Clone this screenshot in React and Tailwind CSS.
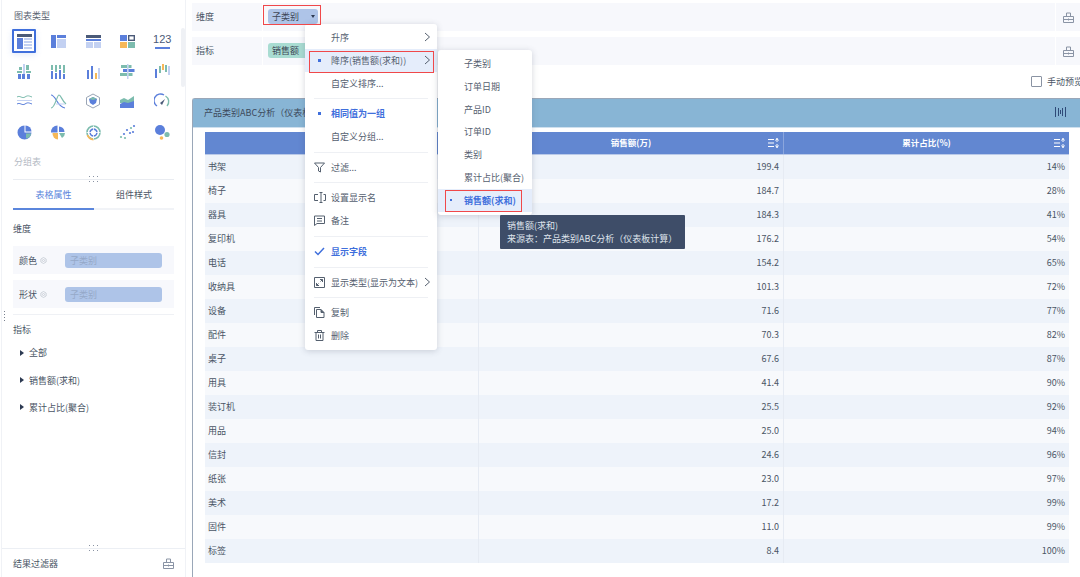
import React from "react";

const B = "#5b7fdb", L = "#c3d1f2", T = "#7dbcae", O = "#f6b858", D = "#4b5a78";

const Bars = ({ items }) => (
  <>
    {items.map(([x, y, w, h, c], i) => (
      <rect key={i} x={x} y={y} width={w} height={h} fill={c} />
    ))}
  </>
);

const chartIcons = [
  <Bars items={[[1, 1, 15, 3, D], [1, 5, 6, 11, B], [8, 5, 8, 2, L], [8, 8, 8, 2, L], [8, 11, 8, 2, L], [8, 14, 8, 2, L]]} />,
  <Bars items={[[1, 2, 5, 13, B], [7, 2, 9, 3, B], [7, 6, 9, 9, L]]} />,
  <Bars items={[[1, 2, 15, 3, D], [1, 6, 15, 2, B], [1, 9, 7, 6, L], [9, 9, 7, 6, L]]} />,
  <>
    <Bars items={[[1, 2, 7, 6, B], [1, 9, 7, 6, O], [9, 9, 7, 6, T]]} />
    <rect x="9.7" y="2.7" width="5.6" height="4.6" fill="none" stroke={D} strokeWidth="1.4" />
  </>,
  <Bars items={[[1, 14, 15, 1.6, B]]} />,
  <Bars items={[[7, 1, 2, 15, L], [3, 4, 3, 3, T], [10, 2, 3, 5, T], [1, 8, 5, 2, T], [10, 8, 5, 2, T], [2, 11, 3, 5, B], [6, 11, 3, 5, B], [11, 11, 3, 5, B]]} />,
  <Bars items={[[1, 2, 2, 5, T], [1, 8, 2, 8, B], [5, 2, 2, 7, T], [5, 10, 2, 6, B], [9, 2, 2, 4, T], [9, 7, 2, 9, B], [13, 2, 2, 8, T], [13, 11, 2, 5, B]]} />,
  <Bars items={[[2, 7, 2, 9, B], [6, 3, 2, 13, B], [10, 10, 2, 6, O], [13, 5, 2, 11, L]]} />,
  <Bars items={[[8, 1, 1.5, 15, L], [2, 2, 6, 3, T], [9.5, 2, 3, 3, T], [4, 6, 4, 3, B], [9.5, 6, 6, 3, B], [1, 10, 7, 3, T], [9.5, 10, 4, 3, T]]} />,
  <Bars items={[[1, 6, 2, 9, B], [5, 3, 2, 7, T], [8, 1, 2, 6, O], [11, 2, 2, 7, T], [14, 3, 2, 9, L]]} />,
  <>
    <path d="M1 4c3-2 5 2 8 0s4-1 7 0" fill="none" stroke={T} strokeWidth="1" />
    <path d="M1 7.500h15" fill="none" stroke={L} strokeWidth="1" />
    <path d="M1 11c3-2 5 2 8 0s4-1 7 0" fill="none" stroke={B} strokeWidth="1" />
  </>,
  <>
    <path d="M1 2c5 0 6 12 14 13" fill="none" stroke={B} strokeWidth="1.200" />
    <path d="M1 15c4 0 6-13 8-13s3 6 7 9" fill="none" stroke={T} strokeWidth="1.200" />
    <path d="M6 11h9" fill="none" stroke={L} strokeWidth="1" />
  </>,
  <>
    <path d="M8 1l6.500 3.500v7L8 15l-6.500-3.500v-7z" fill="none" stroke="#9aa5b5" strokeWidth="1" />
    <path d="M4 6l4-2 4 2-1 4-3 2-3-2z" fill={B} />
    <path d="M4 6l4-2 4 2-4 1z" fill={T} />
  </>,
  <>
    <path d="M1 7l4-2 4 2 6-4v7H1z" fill={T} />
    <path d="M1 11l4-2 4 1 6-2v7H1z" fill={B} />
  </>,
  <>
    <path d="M3 13A6.500 6.500 0 0 1 10 2" fill="none" stroke={B} strokeWidth="1.400" />
    <path d="M11.500 3A6.500 6.500 0 0 1 13 13" fill="none" stroke={T} strokeWidth="1.400" />
    <path d="M6 10l5-4-3 6z" fill={D} />
  </>,
  <>
    <path d="M8.500 1.500a7 7 0 1 0 7 7h-7z" fill={B} />
    <path d="M9.500 1.500a6 6 0 0 1 6 6h-6z" fill={B} />
    <path d="M10 9.500h5a5 5 0 0 1-5 5z" fill={T} />
  </>,
  <>
    <path d="M7.500 1.500v7H1a6.500 6.500 0 0 1 6.500-7z" fill={B} />
    <path d="M9 2.500a5.500 5.500 0 0 1 5.500 5.500H9z" fill={B} />
    <path d="M9 9h6a6 6 0 0 1-3 5z" fill={T} />
    <path d="M8 9v6.500A6 6 0 0 1 2.500 9z" fill={O} />
  </>,
  <>
    <circle cx="8.500" cy="8.500" r="6.500" fill="none" stroke={T} strokeWidth="1.600" />
    <path d="M2.500 11a6.500 6.500 0 0 0 6 4.500" fill="none" stroke={O} strokeWidth="1.800" />
    <circle cx="8.500" cy="8.500" r="3.400" fill="none" stroke={B} strokeWidth="1.600" />
    <path d="M8.500 1.500v14M1.500 8.500h14" stroke="#ffffff" strokeWidth="0.800" />
  </>,
  <>
    {[[2, 13, T], [5, 10, B], [6, 14, T], [8, 6, B], [11, 9, B], [12, 4, T], [14, 8, B], [15, 2, B]].map(([x, y, c], i) => (
      <circle key={i} cx={x} cy={y} r="1.100" fill={c} />
    ))}
  </>,
  <>
    <circle cx="6" cy="6" r="5" fill={B} />
    <circle cx="13" cy="10.500" r="2.600" fill={T} />
    <circle cx="7.500" cy="14" r="1.800" fill={O} />
  </>,
];

const Chart = ({ i }) => (
  <svg width="17" height="17" viewBox="0 0 17 17">
    {chartIcons[i]}
  </svg>
);

const LockIcon = () => (
  <svg width="11" height="11" viewBox="0 0 11 11" fill="none" stroke="#8a94a5" strokeWidth="1">
    <path d="M.5 4.500h10v6H.5zM3.500 4.500V1h4v3.500M.5 7.500h10M5.500 6.500v2" />
  </svg>
);

const Chevron = () => (
  <svg width="7" height="10" viewBox="0 0 7 10" fill="none" stroke="#55606f" strokeWidth="1">
    <path d="M1 1l4.500 4L1 9" />
  </svg>
);

const SortIcon = () => (
  <svg width="11" height="10" viewBox="0 0 11 10" fill="none" stroke="#ffffff" strokeWidth="1">
    <path d="M0 1.500h6M0 5h6M0 8.500h6M9 0v4M7.500 2.500L9 .5l1.500 2M9 6v4M7.500 7.500L9 9.500l1.500-2" />
  </svg>
);

const Handle = () => (
  <div className="grid grid-cols-[1px_1px_1px] gap-x-[3px] gap-y-[4px]">
    {[0, 1, 2, 3, 4, 5].map((i) => (
      <span key={i} className="w-[1px] h-[1px] bg-[#8a93a3]" />
    ))}
  </div>
);

const Hint = () => (
  <svg width="7" height="7" viewBox="0 0 7 7" fill="none" stroke="#c3c9d2" strokeWidth="0.800">
    <path d="M3.500.5l2.600 1.500v3L3.500 6.500.9 5V2z" />
    <circle cx="3.500" cy="3.500" r="1" />
  </svg>
);

const icons = {
  filter: (
    <svg width="11" height="11" viewBox="0 0 11 11" fill="none" stroke="#55606f" strokeWidth="1">
      <path d="M.5 1h10L6.500 5.500V10l-2-1V5.500z" />
    </svg>
  ),
  rename: (
    <svg width="12" height="11" viewBox="0 0 12 11" fill="none" stroke="#55606f" strokeWidth="1">
      <path d="M4 2.500H.5v6H4M9.500 2.500h2v6h-2M7 .5v10M5.500.5h3M5.500 10.500h3" />
    </svg>
  ),
  note: (
    <svg width="11" height="11" viewBox="0 0 11 11" fill="none" stroke="#55606f" strokeWidth="1">
      <path d="M.5 1h10v7.500H3L.5 10.500zM3 3.500h5M3 6h5" />
    </svg>
  ),
  check: (
    <svg width="11" height="9" viewBox="0 0 11 9" fill="none" stroke="#3f6fdc" strokeWidth="1.500">
      <path d="M1 4.500l3 3L10 1" />
    </svg>
  ),
  type: (
    <svg width="11" height="11" viewBox="0 0 11 11" fill="none" stroke="#55606f" strokeWidth="1">
      <path d="M.5.5h10v10H.5z" />
      <path d="M2.500 8.500l2-2M6 2.500h2.500V5M2.500 6v2.500H5M8.500 2.500l-2 2" />
    </svg>
  ),
  copy: (
    <svg width="11" height="11" viewBox="0 0 11 11" fill="none" stroke="#55606f" strokeWidth="1">
      <path d="M.5 8V.5H6M2.500 2.500h4.500l3 3v5h-7.500z" />
      <path d="M7 2.500v3h3" fill="#55606f" />
    </svg>
  ),
  trash: (
    <svg width="11" height="11" viewBox="0 0 11 11" fill="none" stroke="#55606f" strokeWidth="1">
      <path d="M.5 2.500h10M3.500 2.500V.5h4v2M2 2.500v8h7v-8M4.500 4.500v4M6.500 4.500v4" />
    </svg>
  ),
};

const Dot = ({ small }) => <span className={`${small ? "w-[2px] h-[2px]" : "w-[3px] h-[3px]"} bg-[#3f6fdc] shrink-0`} />;

const Sep = ({ h = "h-[7px]" }) => (
  <div className={`${h} flex items-center mx-[9px]`}>
    <div className="w-full h-[1px] bg-[#eef0f4]" />
  </div>
);

const Item = ({ icon, dot, active, bold, chev, children }) => (
  <div className={`h-[23px] flex items-center relative ${active ? "bg-[#e5edfb]" : ""}`}>
    <span className="w-[26px] flex items-center justify-center shrink-0 pl-[3px]">
      {dot ? <Dot /> : icon}
    </span>
    <span className={`flex-1 whitespace-nowrap ${bold ? "text-[#3f6fdc] font-bold" : ""}`}>{children}</span>
    {chev && (
      <span className="absolute right-[6px] top-[6px]">
        <Chevron />
      </span>
    )}
  </div>
);

const rows = [
  ["书架", "199.4", "14%"], ["椅子", "184.7", "28%"], ["器具", "184.3", "41%"], ["复印机", "176.2", "54%"],
  ["电话", "154.2", "65%"], ["收纳具", "101.3", "72%"], ["设备", "71.6", "77%"], ["配件", "70.3", "82%"],
  ["桌子", "67.6", "87%"], ["用具", "41.4", "90%"], ["装订机", "25.5", "92%"], ["用品", "25.0", "94%"],
  ["信封", "24.6", "96%"], ["纸张", "23.0", "97%"], ["美术", "17.2", "99%"], ["固件", "11.0", "99%"],
  ["标签", "8.4", "100%"],
];

const AttrRow = ({ label, className }) => (
  <div className={`mx-[11px] h-[28px] bg-[#f7f8fc] flex items-center ${className}`}>
    <span className="w-[52px] pl-[6px] flex items-center gap-[3px]">
      {label}
      <Hint />
    </span>
    <span className="w-[97px] h-[15px] rounded-[3px] bg-[#aec4e8] text-[#96a9c8] pl-[5px] flex items-center">子类别</span>
  </div>
);

export default function App() {
  return (
    <div
      className="w-[1080px] h-[577px] relative overflow-hidden bg-white flex text-[9px] leading-none text-[#4a5565]"
      style={{ fontFamily: '"Noto Sans CJK SC", "Noto Sans", sans-serif' }}
    >
      {/* Left panel */}
      <aside className="w-[185px] ml-[1px] border-l border-r border-[#f0f2f6] flex flex-col shrink-0 relative">
        <div className="pl-[12px] pt-[11px] h-[26px] text-[#5a6472]">图表类型</div>
        <div className="grid grid-cols-[repeat(5,34.500px)] auto-rows-[30.300px] pl-[5px] relative">
          {chartIcons.map((_, i) => (
            <div key={i} className="flex items-center justify-center">
              {i === 0 ? (
                <div className="w-[24px] h-[24px] border-2 border-[#3f6fdc] rounded-[1px] flex items-center justify-center shadow-[0_2px_6px_rgba(63,111,220,0.15)]">
                  <Chart i={i} />
                </div>
              ) : i === 4 ? (
                <div className="relative flex flex-col items-center">
                  <span className="text-[11px] text-[#4b5a78]" style={{ fontFamily: '"Liberation Sans", sans-serif' }}>123</span>
                  <span className="w-[15px] h-[2px] bg-[#5b7fdb] mt-[2px]" />
                </div>
              ) : (
                <Chart i={i} />
              )}
            </div>
          ))}
          <div className="absolute right-[0px] top-[2px] w-[4px] h-[59px] rounded-[2px] bg-[#eff1f5]" />
        </div>
        <div className="pl-[12px] mt-[5px] h-[19px] flex items-center text-[#b4bac4]">分组表</div>
        <div className="mx-[11px] relative h-[1px] bg-[#e9ecf1] mt-[8px]">
          <div className="absolute left-[76px] top-[-3px]">
            <Handle />
          </div>
        </div>
        <div className="mx-[11px] h-[30px] flex">
          <div className="w-[81px] border-b-2 border-[#5b86dc] text-[#5b86dc] flex items-center justify-center">表格属性</div>
          <div className="flex-1 border-b-2 border-[#f1f3f7] flex items-center justify-center">组件样式</div>
        </div>
        <div className="pl-[11px] mt-[12px] h-[13px] flex items-center">维度</div>
        <AttrRow label="颜色" className="mt-[11px]" />
        <AttrRow label="形状" className="mt-[6px]" />
        <div className="mx-[11px] mt-[6px] h-[1px] bg-[#eff1f5]" />
        <div className="pl-[11px] mt-[8px] h-[13px] flex items-center">指标</div>
        <div className="mt-[3px] flex flex-col">
          {["全部", "销售额(求和)", "累计占比(聚合)"].map((t) => (
            <div key={t} className="h-[27.300px] flex items-center pl-[18px] gap-[5px]">
              <span className="w-0 h-0 border-y-[3px] border-y-transparent border-l-[4px] border-l-[#2d3a52]" />
              <span>{t}</span>
            </div>
          ))}
        </div>
        <div className="flex-1" />
        <div className="relative h-[1px] bg-[#eceff4]">
          <div className="absolute left-[87px] top-[-3px]">
            <Handle />
          </div>
        </div>
        <div className="h-[28px] pl-[11px] pr-[11px] flex items-center justify-between">
          <span>结果过滤器</span>
          <LockIcon />
        </div>
        <div className="absolute left-[2px] top-[311px] flex flex-col gap-[2px]">
          <span className="w-[1px] h-[1px] bg-[#777f8d]" />
          <span className="w-[1px] h-[1px] bg-[#777f8d]" />
          <span className="w-[1px] h-[1px] bg-[#777f8d]" />
          <span className="w-[1px] h-[1px] bg-[#777f8d]" />
        </div>
      </aside>

      {/* Main */}
      <main className="flex-1 ml-[6px] pt-[3px] flex flex-col min-w-0">
        <div className="h-[28px] bg-[#f7f8fc] flex items-stretch">
          <span className="w-[71px] pl-[4px] pb-[2px] flex items-center border-r border-white">维度</span>
          <div className="flex-1 flex items-center pl-[5px] pb-[1px]">
            <span className="w-[50px] h-[15px] rounded-[3px] bg-[#aec4e8] flex items-center pl-[4px] text-[#3d4757]">
              子类别
              <span className="ml-[12px] w-0 h-0 border-x-[2.500px] border-x-transparent border-t-[3px] border-t-[#2d3a52]" />
            </span>
          </div>
          <span className="w-[25px] border-l border-white flex items-center justify-center"><LockIcon /></span>
        </div>
        <div className="h-[28px] mt-[6px] bg-[#f7f8fc] flex items-stretch">
          <span className="w-[71px] pl-[4px] pb-[2px] flex items-center border-r border-white">指标</span>
          <div className="flex-1 flex items-center pl-[5px] pb-[1px]">
            <span className="w-[50px] h-[15px] rounded-[3px] bg-[#a9dcd2] flex items-center pl-[4px] text-[#3d4757]">销售额</span>
          </div>
          <span className="w-[25px] border-l border-white flex items-center justify-center"><LockIcon /></span>
        </div>
        <div className="h-[33px] flex items-center justify-end gap-[5px] shrink-0 whitespace-nowrap mr-[-14px]">
          <span className="w-[11px] h-[11px] border border-[#8a93a3] rounded-[1px]" />
          <span className="w-[47px]">手动预览</span>
        </div>

        <section className="flex-1 border-t border-l border-[#9aa7b8] rounded-tl-[3px] flex flex-col min-h-0">
          <div className="h-[29px] shrink-0 bg-[#88b5d5] border-b border-[#cfe0ee] flex items-center justify-between pl-[11px] pr-[14px] pb-[2px] text-[#3d4a5c]">
            <span>产品类别ABC分析（仪表板计算）</span>
            <svg width="11" height="10" viewBox="0 0 11 10" fill="none" stroke="#2f4a78" strokeWidth="1">
              <path d="M.5 0v10M10.500 0v10M3.500 1v8M7.500 1v8M5.500 3v4" />
            </svg>
          </div>
          <div className="ml-[12px] mr-[11px] mt-[4px] text-[#4a5565]">
            <div className="h-[23px] bg-[#6287d1] border-b border-[#b9c9e8] flex text-white font-bold text-[8.500px]">
              <div className="w-[274px] border-r border-[#8ba6dd]" />
              <div className="w-[305px] pb-[2px] border-r border-[#8ba6dd] flex items-center justify-center relative">
                销售额(万)
                <span className="absolute right-[4px] top-[6px]"><SortIcon /></span>
              </div>
              <div className="flex-1 pb-[2px] flex items-center justify-center relative">
                累计占比(%)
                <span className="absolute right-[4px] top-[6px]"><SortIcon /></span>
              </div>
            </div>
            {rows.map(([a, b, c], i) => (
              <div key={a} className={`h-[24px] flex items-center ${i % 2 === 0 ? "bg-[#eef3fa]" : "bg-[#f7f9fc]"}`}>
                <div className="w-[274px] h-full pl-[3px] pb-[2px] flex items-center border-r border-[#e6ebf3]">{a}</div>
                <div className="w-[305px] h-full pr-[4px] pb-[2px] flex items-center justify-end border-r border-[#e6ebf3]">{b}</div>
                <div className="flex-1 h-full pr-[4px] pb-[2px] flex items-center justify-end">{c}</div>
              </div>
            ))}
          </div>
        </section>
      </main>

      {/* Context menu */}
      <div className="absolute left-[305px] top-[24px] w-[132px] h-[326px] pt-[2px] bg-white rounded-[3px] shadow-[0_1px_6px_rgba(60,70,90,0.22)] text-[#55606f] z-10">
        <Item chev>升序</Item>
        <Item dot active chev>降序(销售额(求和))</Item>
        <Item>自定义排序...</Item>
        <Sep />
        <Item dot bold>相同值为一组</Item>
        <Item>自定义分组...</Item>
        <Sep h="h-[8px]" />
        <Item icon={icons.filter}>过滤...</Item>
        <Sep />
        <Item icon={icons.rename}>设置显示名</Item>
        <Item icon={icons.note}>备注</Item>
        <Sep h="h-[8px]" />
        <Item icon={icons.check} bold>显示字段</Item>
        <Sep h="h-[8px]" />
        <Item icon={icons.type} chev>显示类型(显示为文本)</Item>
        <Sep />
        <Item icon={icons.copy}>复制</Item>
        <Item icon={icons.trash}>删除</Item>
      </div>

      {/* Submenu */}
      <div className="absolute left-[438px] top-[50px] w-[94px] h-[165px] pt-[2.500px] bg-white rounded-[3px] shadow-[0_1px_6px_rgba(60,70,90,0.22)] text-[#55606f] z-10">
        {["子类别", "订单日期", "产品ID", "订单ID", "类别", "累计占比(聚合)"].map((t) => (
          <div key={t} className="h-[22.700px] pl-[26px] flex items-center whitespace-nowrap">{t}</div>
        ))}
        <div className="h-[23px] pl-[12px] gap-[12px] flex items-center bg-[#e5edfb] text-[#3f6fdc] font-bold whitespace-nowrap">
          <Dot small />
          销售额(求和)
        </div>
      </div>

      {/* Tooltip */}
      <div className="absolute left-[500px] top-[215px] w-[185px] h-[34px] rounded-[1px] bg-[#3e4d68] text-[#dfe4ec] pl-[7px] flex flex-col justify-center gap-[4px] z-20 whitespace-nowrap">
        <div>销售额(求和)</div>
        <div>来源表：产品类别ABC分析（仪表板计算）</div>
      </div>

      {/* Red annotation boxes */}
      <div className="absolute left-[263px] top-[5px] w-[58px] h-[20px] border border-[#f0484a] z-30" />
      <div className="absolute left-[309px] top-[51px] w-[125px] h-[22px] border border-[#f0484a] z-30" />
      <div className="absolute left-[445px] top-[190px] w-[77px] h-[22px] border border-[#f0484a] z-30" />
    </div>
  );
}
